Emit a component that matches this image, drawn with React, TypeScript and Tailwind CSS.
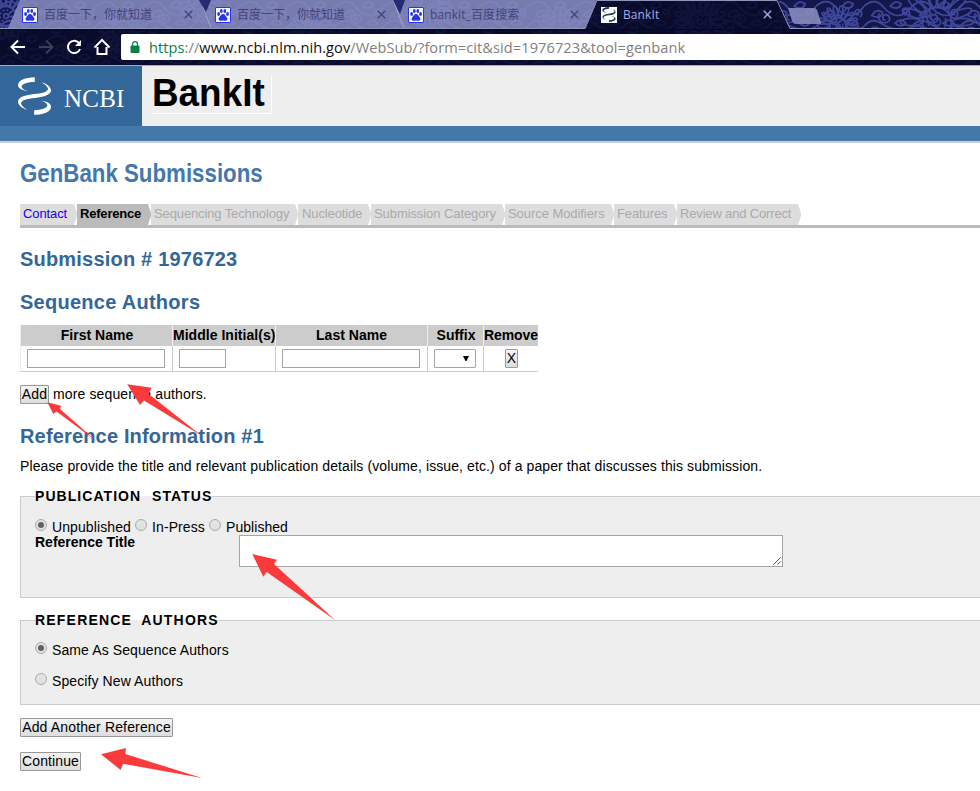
import React from "react";

const flowers = [
  { x: 6, y: 16, r: 24 },
  { x: 122, y: 30, r: 22 },
  { x: 198, y: 0, r: 22 },
  { x: 312, y: 34, r: 24 },
  { x: 430, y: 6, r: 22 },
  { x: 560, y: 30, r: 22 },
  { x: 700, y: 22, r: 26 },
  { x: 838, y: 26, r: 20 },
  { x: 937, y: 22, r: 36 },
];

function Flower({ x, y, r }: { x: number; y: number; r: number }) {
  const petals = Array.from({ length: 18 }, (_, i) => i * 20);
  return (
    <g transform={`translate(${x} ${y})`}>
      {petals.map((a) => (
        <ellipse key={a} cx={r * 0.72} cy="0" rx={r * 0.3} ry={r * 0.1} transform={`rotate(${a})`} />
      ))}
      <circle r={r * 0.4} />
      <circle r={r * 0.25} strokeDasharray="2 2" />
      <circle r={r * 0.1} />
    </g>
  );
}

function Floral() {
  return (
    <g fill="none" strokeWidth="1.7">
      <rect width="980" height="65" fill="url(#vines)" stroke="none" />
      {flowers.map((f) => (
        <Flower key={f.x} {...f} />
      ))}
    </g>
  );
}

function Backdrop() {
  return (
    <svg className="absolute inset-0 h-[65px] w-[980px]" viewBox="0 0 980 65">
      <defs>
        <pattern id="vines" width="48" height="34" patternUnits="userSpaceOnUse">
          <g fill="none" stroke="#3f479b" strokeWidth="2.2" transform="scale(.774)">
            <path d="M0 8Q14-4 24 8T44 20T62 8M0 34Q10 22 22 30T46 38T62 34" />
            <path d="M10 20q6-10 14-4q-2 10-14 4zM34 8q6-9 14-3q-3 9-14 3zM40 30q8-8 14 0q-6 7-14 0zM6 42q4-9 12-6q0 9-12 6z" />
            <path d="M28 26c-5 0-5-7 0-7s8 8 1 10s-13-5-9-12M56 18c-4 3-8-2-4-5s10 4 5 9" />
          </g>
        </pattern>
      </defs>
      <rect width="980" height="65" fill="#14174c" />
      <g stroke="#3f479b"><Floral /></g>
      <path d="M8 28L20 0H199L211 28ZM211 28L200 0H396L404 28ZM404 28L394 0H597L585 28Z" fill="#888dc0" fillOpacity=".86" />
      <path d="M0 28.5H586L597 0H778L790 28.5H980V65H0Z" fill="#060925" fillOpacity=".82" />
      <path d="M0 28.5H585L597 .5H777L790 28.5H980" fill="none" stroke="#8e96ba" />
      <path d="M200 0L211 28M393 0L404 28" fill="none" stroke="#a5a9ca" />
      <path d="M199 0L206 12L211 0ZM393 0L400 14L405 0Z" fill="#252b72" />
      <path d="M788 8H814Q816 8 817 10L821 22Q822 24 819 24H796Q793 24 792 21Z" fill="#858abd" fillOpacity=".9" />
      <path d="M0 29.5H980" stroke="#050721" />
    </svg>
  );
}

function Paw() {
  return (
    <svg className="size-4 shrink-0" viewBox="0 0 16 16">
      <path d="M0 0h16v16H0z" fill="#f2f4ff" />
      <path d="M.5.5h15v15H.5z" fill="none" stroke="#2b36dd" />
      <g fill="#2b36dd">
        <ellipse cx="3.6" cy="7" rx="1.4" ry="1.9" />
        <ellipse cx="6.3" cy="4" rx="1.4" ry="1.9" />
        <ellipse cx="9.8" cy="4" rx="1.4" ry="1.9" />
        <ellipse cx="12.5" cy="7" rx="1.4" ry="1.9" />
        <path d="M8 7c2 0 2.5 2 3.7 3.2 1.5 1.7.3 3.6-1.4 3.6-1 0-1.5-.4-2.3-.4s-1.300.4-2.300.4c-1.700 0-2.900-1.900-1.400-3.600C5.500 9 6 7 8 7z" />
      </g>
    </svg>
  );
}

const crescent = "M51 0V14C30 15 11 20 11 29C11 34 20 39 31 43C12 40 0 34 0 24C0 9 22 1 51 0Z";

function NcbiMark({ className, color }: { className: string; color: string }) {
  return (
    <svg className={className} viewBox="0 0 100 114" fill={color}>
      <path d={crescent} />
      <path d={crescent} transform="rotate(180 50 57)" />
      <path d="M71 15C92 21 101 32 100 42C97 55 75 60 52 63C28 65 10 69 9 79C10 86 20 94 29 99C8 93 -1 82 0 72C3 59 25 54 48 51C72 49 90 45 91 35C90 28 80 20 71 15Z" />
    </svg>
  );
}

function Close() {
  return (
    <svg className="size-[9px] shrink-0" viewBox="0 0 9 9" stroke="currentColor" strokeWidth="1.4">
      <path d="M.8.8l7.400 7.400M8.200.8L.8 8.200" />
    </svg>
  );
}

function Tab({ title, className, active }: { title: string; className: string; active?: boolean }) {
  return (
    <div className={`flex h-[29px] items-center ${active ? "text-[#a3abe6]" : "text-[#43447a]"} ${className}`}>
      {active ? (
        <span className="flex size-4 items-center justify-center bg-white">
          <NcbiMark className="h-[15px] w-[14px]" color="#213b55" />
        </span>
      ) : (
        <Paw />
      )}
      <span className="ml-[6px] flex-1 whitespace-nowrap font-['Open_Sans','Noto_Sans_CJK_SC',sans-serif] text-xs">{title}</span>
      <Close />
    </div>
  );
}

function Browser() {
  return (
    <header className="relative h-[65px] overflow-hidden">
      <Backdrop />
      <div className="relative">
        <div className="flex h-[29px] pl-[22px]">
          <Tab title="百度一下，你就知道" className="w-[171px]" />
          <Tab title="百度一下，你就知道" className="ml-[22px] w-[171px]" />
          <Tab title="bankit_百度搜索" className="ml-[22px] w-[171px] tracking-[0.1px]" />
          <Tab title="BankIt" className="ml-[22px] w-[171px] tracking-[0.1px]" active />
        </div>
        <div className="flex h-[36px] items-center">
          <svg className="h-[36px] w-[121px] shrink-0" viewBox="0 29 121 36" fill="none" stroke="#fff" strokeWidth="2">
            <path d="M25 47H12M18 40.500L11.500 47L18 53.500" />
            <path d="M39 47H52M46 40.500L52.500 47L46 53.500" stroke="#3b3e55" />
            <path d="M79 43A6.200 6.200 0 1 0 80 49" />
            <path d="M81 40V46H75Z" fill="#fff" stroke="none" />
            <path d="M94.500 47.500L102 40L109.500 47.500M97.500 47V54H106.500V47" />
          </svg>
          <div className="flex h-[26px] flex-1 items-center rounded-l-[2px] bg-white font-['Open_Sans',sans-serif] text-[14.6px] text-[#808080]">
            <svg className="ml-[9px] h-[12px] w-[10px]" viewBox="0 0 10 12">
              <path d="M1 5h8v6.500H1z" fill="#0b8043" stroke="#0b8043" />
              <path d="M2.500 5V3.200a2.500 2.500 0 0 1 5 0V5" fill="none" stroke="#0b8043" strokeWidth="1.300" />
            </svg>
            <span className="ml-[9px] whitespace-nowrap leading-[24px] tracking-[0.07px]">
              <span className="text-[#0b8043]">https</span>://<span className="text-[#111]">www.ncbi.nlm.nih.gov</span>/WebSub/?form=cit&amp;sid=1976723&amp;tool=genbank
            </span>
          </div>
        </div>
      </div>
    </header>
  );
}

const steps = [
  { label: "Contact", box: "w-[57px]", fill: "#dddddd", text: "text-[#2200ee] tracking-[-0.1px]" },
  { label: "Reference", box: "w-[74px]", fill: "#bbbbbb", text: "font-bold text-black tracking-[-0.2px]" },
  { label: "Sequencing Technology", box: "w-[147px]", fill: "#dddddd", text: "text-[#aaa] tracking-[-0.12px]" },
  { label: "Nucleotide", box: "w-[73px]", fill: "#dddddd", text: "pl-px text-[#aaa] tracking-[-0.12px]" },
  { label: "Submission Category", box: "w-[134px]", fill: "#dddddd", text: "text-[#aaa] tracking-[-0.08px]" },
  { label: "Source Modifiers", box: "w-[109px]", fill: "#dddddd", text: "text-[#aaa] tracking-[-0.06px]" },
  { label: "Features", box: "w-[63px]", fill: "#dddddd", text: "text-[#aaa] tracking-[-0.1px]" },
  { label: "Review and Correct", box: "w-[124px]", fill: "#dddddd", text: "text-[#aaa] tracking-[-0.16px]" },
];

function Steps() {
  return (
    <nav className="flex h-6 border-b-[3px] border-[#bbb]">
      {steps.map((s) => (
        <div key={s.label} className={`flex h-[21px] shrink-0 ${s.box}`}>
          <div className="flex-1 whitespace-nowrap pl-[3px] text-[13px] leading-[19px]" style={{ background: s.fill }}>
            <span className={s.text}>{s.label}</span>
          </div>
          <svg className="h-[21px] w-[3px]" viewBox="0 0 3 21" fill={s.fill}>
            <path d="M0 0L3 9V12L0 21Z" />
          </svg>
        </div>
      ))}
    </nav>
  );
}

function Button({ children, className }: { children: React.ReactNode; className: string }) {
  return (
    <button className={`flex h-[19px] shrink-0 justify-center whitespace-nowrap rounded-[1px] border border-[#999] bg-linear-to-b from-[#f4f4f4] to-[#ddd] leading-[17px] ${className}`}>
      {children}
    </button>
  );
}

function Radio({ on }: { on?: boolean }) {
  return (
    <span className="mr-[5px] flex size-3 shrink-0 items-center justify-center rounded-full border border-[#aaa] bg-linear-to-b from-[#e4e4e4] to-[#e0e0e0]">
      {on && <span className="size-[6px] rounded-full bg-[#606060]" />}
    </span>
  );
}

function Heading({ children, className }: { children: React.ReactNode; className: string }) {
  return <h2 className={`h-6 whitespace-nowrap text-xl font-bold leading-6 text-[#336699] ${className}`}>{children}</h2>;
}

const cell = "flex h-[26px] items-start border-b border-l border-[#ccc] pt-[3px]";
const head = "h-[21px] whitespace-nowrap border-l border-[#eee] bg-[#ccc] text-center font-bold leading-[21px]";
const legend =
  "-mt-[10px] h-[18px] w-max whitespace-nowrap bg-linear-to-b from-transparent from-50% to-[#eee] to-50% font-bold leading-[18px]";

function AuthorsTable() {
  return (
    <div className="grid w-[518px] grid-cols-[152px_103px_152px_56px_55px]">
      <div className={`${head} pl-px`}>First Name</div>
      <div className={`${head} tracking-[0.03px]`}>Middle Initial(s)</div>
      <div className={`${head} tracking-[0.02px]`}>Last Name</div>
      <div className={`${head} pl-px`}>Suffix</div>
      <div className={`${head} tracking-[-0.1px]`}>Remove</div>
      <div className={`${cell} border-l-[#eee] pl-[6px]`}><span className="h-[19px] w-[138px] border border-[#a5a5a5] bg-white" /></div>
      <div className={`${cell} pl-[6px]`}><span className="h-[19px] w-[47px] border border-[#a5a5a5] bg-white" /></div>
      <div className={`${cell} pl-[6px]`}><span className="h-[19px] w-[138px] border border-[#a5a5a5] bg-white" /></div>
      <div className={`${cell} pl-[6px]`}>
        <span className="flex h-[19px] w-[42px] items-center justify-end rounded-[1px] border border-[#a5a5a5] bg-white pr-[6px]">
          <svg className="h-[5px] w-[6px]" viewBox="0 0 6 5"><path d="M0 0h6L3.500 5h-1z" /></svg>
        </span>
      </div>
      <div className={`${cell} pl-[21px]`}><Button className="w-[13px]">X</Button></div>
    </div>
  );
}

function Arrows() {
  return (
    <svg className="pointer-events-none absolute left-0 top-0 h-[791px] w-[980px]" viewBox="0 0 980 791" fill="#fb3b3b">
      <path d="M127.300 384.300L151.700 387.700L148.700 394L202 436L144 400.500L140 405Z" />
      <path d="M47.300 402.300L61 405.700L60 409L97 441.500L56.500 411.500L53.300 414Z" />
      <path d="M252.300 554L277 559.700L274 564L335 620L266.700 572L263.300 576.700Z" />
      <path d="M101 754.300L126 748L125.300 754L202 778L123 763.700L120.700 770Z" />
    </svg>
  );
}

export default function App() {
  return (
    <div className="relative h-[791px] w-[980px] overflow-hidden bg-white font-['Liberation_Sans',Arial,sans-serif] text-[14px] text-black">
      <Browser />
      <div className="flex h-[61px] border-t border-[#aaa] bg-[#eee]">
        <div className="flex w-[142px] items-center bg-[#336699] pl-[18px]">
          <NcbiMark className="h-[38px] w-[33px]" color="#fff" />
          <span className="ml-[13px] mt-1 font-['Liberation_Serif',serif] text-[25px] leading-none tracking-[0.2px] text-white">NCBI</span>
        </div>
        <div className="ml-[10px] mt-[10px] h-[38px] w-[120px] border-b border-r border-white">
          <h1 className="w-max origin-left scale-x-[0.97] whitespace-nowrap text-[38px] font-bold leading-[34px]">BankIt</h1>
        </div>
      </div>
      <div className="h-[17px] border-b-2 border-[#c8ccd4] bg-[#4477aa]" />
      <main className="pl-5">
        <div className="h-[61px] pt-[15px]">
          <h1 className="w-max origin-left scale-x-[0.857] whitespace-nowrap text-[26px] font-bold leading-[30px] text-[#4477aa]">GenBank Submissions</h1>
        </div>
        <Steps />
        <Heading className="mt-[19px] tracking-[0.2px]">Submission # 1976723</Heading>
        <Heading className="mt-[19px] tracking-[0.27px]">Sequence Authors</Heading>
        <div className="mt-[11px]"><AuthorsTable /></div>
        <div className="mt-[13px] flex h-[19px] items-center">
          <Button className="w-[29px] tracking-[0.2px]">Add</Button>
          <span className="ml-1 tracking-[0.13px]">more sequence authors.</span>
        </div>
        <Heading className="mt-[20px] tracking-[0.16px]">Reference Information #1</Heading>
        <p className="mt-[8px] h-5 whitespace-nowrap leading-5 tracking-[0.1px]">
          Please provide the title and relevant publication details (volume, issue, etc.) of a paper that discusses this submission.
        </p>
        <section className="mt-[20px] h-[102px] border-y border-l border-[#ccc] bg-[#eee] pl-[14px]">
          <h3 className={`${legend} tracking-[1.05px] [word-spacing:6px]`}>PUBLICATION STATUS</h3>
          <div className="mt-[14px] flex h-[16px] items-start leading-[16px]">
            <Radio on /><span className="w-[83px] tracking-[0.1px]">Unpublished</span>
            <Radio /><span className="w-[57px] tracking-[0.1px]">In-Press</span>
            <Radio /><span className="tracking-[0.05px]">Published</span>
          </div>
          <div className="flex">
            <b className="w-[204px] leading-[15px]">Reference Title</b>
            <div className="flex h-[32px] w-[544px] items-end justify-end border border-[#a5a5a5] bg-white p-px">
              <svg className="size-[8px]" viewBox="0 0 8 8" stroke="#444" strokeWidth=".9"><path d="M.5 7.500l7-7M4.500 7.500l3-3" /></svg>
            </div>
          </div>
        </section>
        <section className="mt-[22px] h-[85px] border-y border-l border-[#ccc] bg-[#eee] pl-[14px]">
          <h3 className={`${legend} tracking-[1.2px] [word-spacing:4.500px]`}>REFERENCE AUTHORS</h3>
          <div className="mt-[13px] flex h-[31px] leading-[16px]"><Radio on /><span className="tracking-[0.1px]">Same As Sequence Authors</span></div>
          <div className="flex leading-[16px]"><Radio /><span className="tracking-[0.1px]">Specify New Authors</span></div>
        </section>
        <Button className="mt-[13px] w-[153px] tracking-[0.15px]">Add Another Reference</Button>
        <Button className="mt-[15px] w-[61px] tracking-[0.1px]">Continue</Button>
      </main>
      <Arrows />
    </div>
  );
}
